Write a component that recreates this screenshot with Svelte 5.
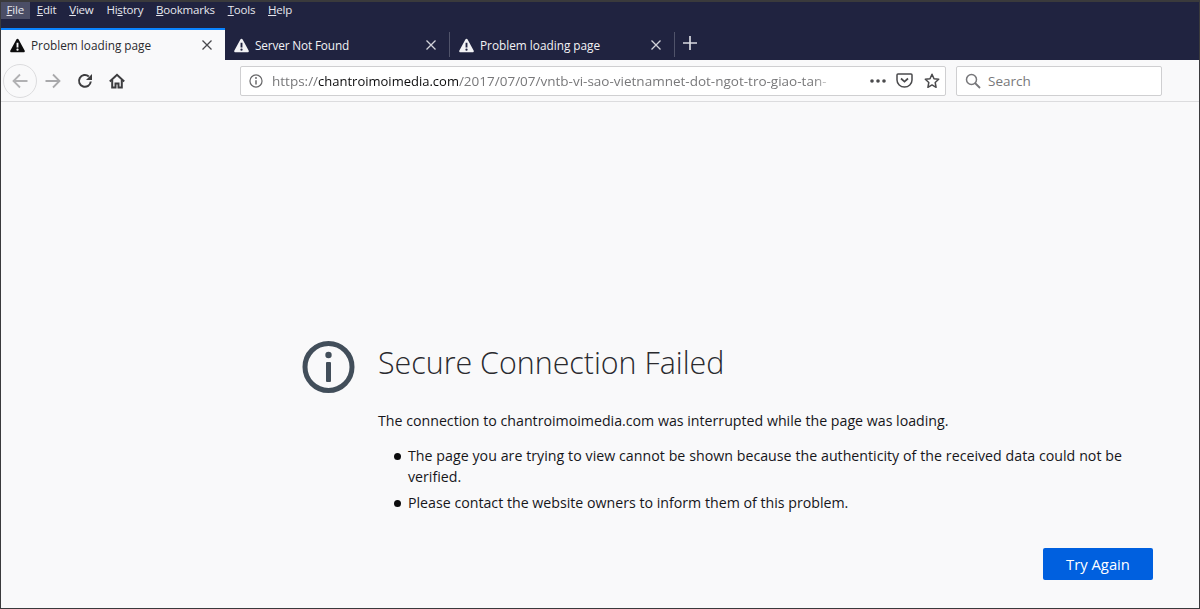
<script>
    const menus = [
        { pre: '', key: 'F', rest: 'ile', active: true },
        { pre: '', key: 'E', rest: 'dit' },
        { pre: '', key: 'V', rest: 'iew' },
        { pre: 'Hi', key: 's', rest: 'tory' },
        { pre: '', key: 'B', rest: 'ookmarks' },
        { pre: '', key: 'T', rest: 'ools' },
        { pre: '', key: 'H', rest: 'elp' }
    ];

    const tabs = [
        { title: 'Problem loading page', selected: true },
        { title: 'Server Not Found' },
        { title: 'Problem loading page' }
    ];
</script>

<div class="window">
    <nav class="menubar">
        {#each menus as m}
            <span class="menu" class:active={m.active}>{m.pre}<u>{m.key}</u>{m.rest}</span>
        {/each}
    </nav>

    <div class="tabbar">
        {#each tabs as tab, i}
            <div class="tab" class:selected={tab.selected}>
                <svg class="warn" viewBox="0 0 16 16" width="15" height="15">
                    <path fill-rule="evenodd" d="M8 .8c-.5 0-.9.3-1.200.8L.4 13.400c-.5 1 .1 1.800 1.100 1.800h13c1 0 1.600-.8 1.100-1.800L9.200 1.600C8.900 1.100 8.500.8 8 .8zM7 5h2v5.200H7zm1 6.200a1.200 1.200 0 1 1 0 2.400 1.200 1.200 0 0 1 0-2.400z"/>
                </svg>
                <span class="tab-title">{tab.title}</span>
                <svg class="close" viewBox="0 0 12 12" width="12" height="12">
                    <path d="M1.500 1.500l9 9m0-9l-9 9" stroke="currentColor" stroke-width="1.300" fill="none"/>
                </svg>
            </div>
            {#if i > 0}
                <div class="sep"></div>
            {/if}
        {/each}
        <svg class="plus" viewBox="0 0 16 16" width="16" height="16">
            <path d="M8 1v14M1 8h14" stroke="currentColor" stroke-width="1.700" fill="none"/>
        </svg>
    </div>

    <div class="toolbar">
        <div class="back">
            <svg viewBox="0 0 18 18" width="18" height="18">
                <path d="M16.500 9H2.500M9 2.500L2.500 9 9 15.500" stroke="#b1b1b3" stroke-width="1.800" fill="none"/>
            </svg>
        </div>
        <svg class="forward" viewBox="0 0 18 18" width="18" height="18">
            <path d="M1.500 9h14M9 2.500L15.500 9 9 15.500" stroke="#a9a9ab" stroke-width="1.800" fill="none"/>
        </svg>
        <svg class="reload" viewBox="0 0 16 16" width="16" height="16">
            <path d="M13.800 8.500A5.900 5.900 0 1 1 11.800 3.400" stroke="#3d3d3f" stroke-width="2" fill="none"/>
            <path d="M15 1v6H9z" fill="#3d3d3f"/>
        </svg>
        <svg class="home" viewBox="0 0 16 16" width="16" height="16">
            <path d="M.8 8.500L8 1.800l7.200 6.700" stroke="#3d3d3f" stroke-width="2" fill="none"/>
            <path d="M3.200 7v7.500h3.300V10.500h3v4h3.300V7" stroke="#3d3d3f" stroke-width="2" fill="none"/>
        </svg>

        <div class="urlbar">
            <svg class="info" viewBox="0 0 16 16" width="14" height="14">
                <circle cx="8" cy="8" r="6.900" stroke="#68686a" stroke-width="1.400" fill="none"/>
                <path d="M8 7v5" stroke="#68686a" stroke-width="1.700"/>
                <circle cx="8" cy="4.600" r="1.100" fill="#68686a"/>
            </svg>
            <div class="url"><span class="dim">https://</span><span class="domain">chantroimoimedia.com</span><span class="dim">/2017/07/07/vntb-vi-sao-vietnamnet-dot-ngot-tro-giao-tan-</span></div>
            <svg class="dots" viewBox="0 0 16 4" width="16" height="4">
                <circle cx="2" cy="2" r="1.800" fill="#4a4a4c"/>
                <circle cx="8" cy="2" r="1.800" fill="#4a4a4c"/>
                <circle cx="14" cy="2" r="1.800" fill="#4a4a4c"/>
            </svg>
            <svg class="pocket" viewBox="0 0 17 15" width="17" height="15">
                <path d="M2 1h13c.6 0 1 .4 1 1v5a7.500 7 0 0 1-15 0V2c0-.6.4-1 1-1z" stroke="#4a4a4c" stroke-width="1.500" fill="none"/>
                <path d="M5 5.500l3.500 3.200L12 5.500" stroke="#4a4a4c" stroke-width="1.700" fill="none"/>
            </svg>
            <svg class="star" viewBox="0 0 16 16" width="16" height="16">
                <path d="M8 1.300l2 4.400 4.700.6-3.500 3.200.9 4.800L8 11.900l-4.100 2.400.9-4.800L1.300 6.300 6 5.700z" stroke="#4a4a4c" stroke-width="1.500" stroke-linejoin="round" fill="none"/>
            </svg>
        </div>

        <div class="searchbar">
            <svg viewBox="0 0 16 16" width="16" height="16">
                <circle cx="6.500" cy="6.500" r="5" stroke="#77777a" stroke-width="1.500" fill="none"/>
                <path d="M10 10l5 5" stroke="#77777a" stroke-width="1.800"/>
            </svg>
            <span>Search</span>
        </div>
    </div>

    <main class="page">
        <div class="container">
            <svg class="big-info" viewBox="0 0 54 54" width="54" height="54">
                <circle cx="26.500" cy="27" r="23.500" stroke="#424e5a" stroke-width="5" fill="none"/>
                <rect x="24" y="22" width="5" height="20" rx="1" fill="#424e5a"/>
                <circle cx="26.500" cy="15" r="3.200" fill="#424e5a"/>
            </svg>
            <div class="message">
                <h1>Secure Connection Failed</h1>
                <p>The connection to chantroimoimedia.com was interrupted while the page was loading.</p>
                <ul>
                    <li><span>The page you are trying to view cannot be shown because the authenticity of the received data could not be verified.</span></li>
                    <li><span>Please contact the website owners to inform them of this problem.</span></li>
                </ul>
                <div class="actions">
                    <button>Try Again</button>
                </div>
            </div>
        </div>
    </main>
</div>

<style>
    :global(body) {
        margin: 0;
        background: #f9f9fa;
    }

    .window {
        width: 1200px;
        height: 609px;
        box-sizing: border-box;
        display: flex;
        flex-direction: column;
        overflow: hidden;
        border: 1px solid #3a3a3c;
        border-top-width: 2px;
        font-family: "Open Sans", "Noto Sans", sans-serif;
        background: #f9f9fa;
    }

    .menubar {
        height: 26px;
        flex: none;
        box-sizing: border-box;
        display: flex;
        align-items: flex-start;
        background: #202340;
        color: #e6e7ee;
        font-size: 11.500px;
    }

    .menu {
        height: 17px;
        line-height: 16px;
        padding: 0 6.400px;
        letter-spacing: -0.2px;
    }

    .menu.active {
        background: #4b4e66;
        padding: 0 6.500px 0 5.500px;
    }

    .tabbar {
        height: 32px;
        flex: none;
        display: flex;
        align-items: stretch;
        background: #202340;
        color: #f2f2f5;
    }

    .tab {
        width: 224px;
        box-sizing: border-box;
        display: flex;
        align-items: center;
        padding: 0 12px 0 9px;
        border-top: 2px solid transparent;
        font-size: 11.800px;
    }

    .tab:nth-child(2) .tab-title {
        letter-spacing: -0.15px;
    }

    .tab.selected {
        border-top-color: #0a84ff;
        background: #f9f9fa;
        color: #2a2a2e;
    }

    .sep {
        width: 1px;
        flex: none;
        margin: 4px 0 3px;
        background: #50536a;
    }

    .warn {
        fill: currentColor;
        flex: none;
    }

    .tab.selected .warn {
        fill: #0c0c0d;
    }

    .tab-title {
        margin-left: 6px;
        flex: 1;
        white-space: nowrap;
    }

    .close {
        opacity: 0.85;
        flex: none;
    }

    .plus {
        color: #d8d9e0;
        margin: 7px 0 0 7px;
    }

    .toolbar {
        height: 42px;
        flex: none;
        box-sizing: border-box;
        display: flex;
        align-items: center;
        background: #f9f9fa;
        border-bottom: 1px solid #dcdcde;
    }

    .back {
        width: 34px;
        height: 34px;
        margin-left: 2px;
        border: 1px solid #dcdcde;
        border-radius: 50%;
        box-sizing: border-box;
        display: flex;
        align-items: center;
        justify-content: center;
    }

    .forward {
        margin-left: 7px;
    }

    .reload {
        margin-left: 15px;
    }

    .home {
        margin-left: 16px;
    }

    .urlbar {
        width: 706px;
        height: 30px;
        margin-left: 115px;
        box-sizing: border-box;
        display: flex;
        align-items: center;
        background: #fff;
        border: 1px solid #cfcfd1;
        border-radius: 2px;
        padding-left: 8px;
    }

    .url {
        width: 562px;
        margin-left: 9px;
        overflow: hidden;
        white-space: nowrap;
        font-size: 13.500px;
        color: #0c0c0d;
        mask-image: linear-gradient(to left, transparent 0, #000 20px);
    }

    .domain {
        font-size: 13px;
    }

    .dim {
        color: #78787a;
    }

    .dots {
        margin-left: 36px;
    }

    .pocket {
        margin-left: 10px;
    }

    .star {
        margin-left: 11px;
    }

    .searchbar {
        width: 206px;
        height: 30px;
        margin-left: 10px;
        box-sizing: border-box;
        display: flex;
        align-items: center;
        gap: 7px;
        padding-left: 8px;
        background: #fff;
        border: 1px solid #cfcfd1;
        border-radius: 2px;
        color: #78787a;
        font-size: 13.500px;
    }

    .page {
        flex: 1;
        padding: 238px 0 0 301px;
        color: #16161a;
    }

    .container {
        display: flex;
        align-items: flex-start;
        gap: 22px;
    }

    .big-info {
        flex: none;
    }

    .message {
        width: 775px;
    }

    h1 {
        margin: 1px 0 0;
        font-size: 30.400px;
        line-height: 44px;
        font-weight: 300;
        color: #2a2a2e;
    }

    p {
        margin: 26px 0 0;
        font-size: 14.200px;
        line-height: 20.500px;
    }

    ul {
        margin: 14.500px 0 0;
        padding-left: 16px;
        list-style: none;
        font-size: 14.200px;
        line-height: 20.500px;
    }

    li {
        display: flex;
        gap: 7px;
        margin-bottom: 6px;
    }

    li:first-child {
        word-spacing: 0.2px;
    }

    li::before {
        content: "";
        flex: none;
        width: 7px;
        height: 7px;
        margin-top: 7px;
        border-radius: 50%;
        background: #0c0c0d;
    }

    .actions {
        display: flex;
        justify-content: flex-end;
        margin-top: 34px;
    }

    button {
        width: 110px;
        height: 32px;
        background: #0060df;
        color: #fff;
        border: none;
        border-radius: 2px;
        font: inherit;
        font-size: 14.800px;
    }
</style>
